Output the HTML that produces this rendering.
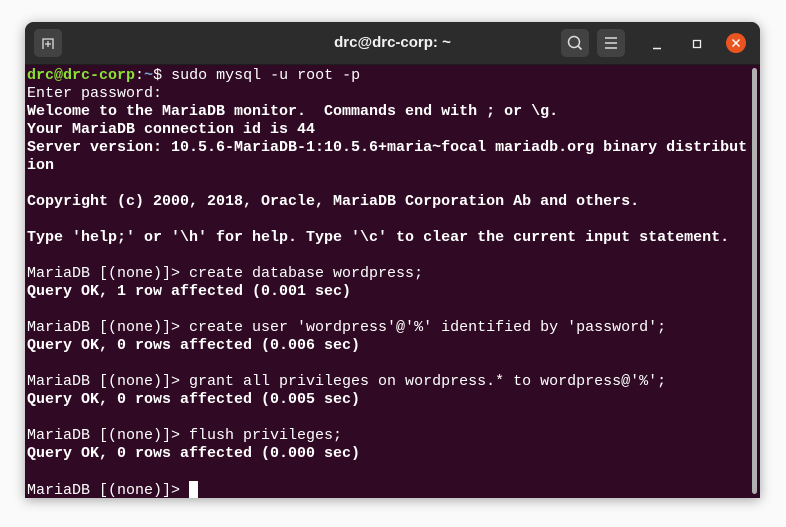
<!DOCTYPE html>
<html><head><style>
html,body{margin:0;padding:0;width:786px;height:527px;background:#fafafa;overflow:hidden}
.win{position:absolute;left:25px;top:22px;width:735px;height:476px;background:#300a24;border-radius:9px 9px 0 0;box-shadow:0 2px 12px rgba(0,0,0,.35);overflow:hidden}
.tb{position:absolute;left:0;top:0;width:735px;height:42px;background:#2c2c2c;border-bottom:1px solid #1e1e1e}
.btn{position:absolute;top:7px;width:28px;height:28px;background:#424242;border-radius:5px}
.title{position:absolute;left:0;width:735px;top:12px;text-align:center;color:#f2f2f2;font:bold 15px "Liberation Sans",sans-serif}
.term{position:absolute;left:2px;top:45px;font:15px/18px "Liberation Mono",monospace;color:#fff;white-space:pre}
b{font-weight:bold}
.g{color:#8ae234;font-weight:bold}.bl{color:#729fcf;font-weight:bold}
.sb{position:absolute;left:727px;top:46px;width:5px;height:426px;background:#b0b0b0;border-radius:3px}
.cur{display:inline-block;width:9px;height:17px;background:#fff;vertical-align:-4px}
</style></head><body>
<div class="win">
<div class="tb">
<div class="btn" style="left:9px"><svg width="28" height="28"><path d="M9 20V10h10v10" fill="none" stroke="#ddd" stroke-width="1.3"/><path d="M14 12v6M11 15h6" stroke="#ddd" stroke-width="1.3"/></svg></div>
<div class="title">drc@drc-corp: ~</div>
<div class="btn" style="left:536px"><svg width="28" height="28"><circle cx="13" cy="13" r="5.5" fill="none" stroke="#ddd" stroke-width="1.5"/><path d="M17 17l3.5 3.5" stroke="#ddd" stroke-width="1.6"/></svg></div>
<div class="btn" style="left:572px"><svg width="28" height="28"><path d="M8 9h12M8 14h12M8 19h12" stroke="#ddd" stroke-width="1.4"/></svg></div>
<svg style="position:absolute;left:620px;top:10px" width="110" height="24"><path d="M8 16.5h8" stroke="#eee" stroke-width="1.4"/><rect x="48.5" y="8.5" width="7" height="7" fill="none" stroke="#eee" stroke-width="1.3"/><circle cx="91" cy="11" r="10" fill="#e95420"/><path d="M87.5 7.5l7 7M94.5 7.5l-7 7" stroke="#fff" stroke-width="1.5"/></svg>
</div>
<div class="term"><span class="g">drc@drc-corp</span>:<span class="bl">~</span>$ sudo mysql -u root -p
Enter password: 
<b>Welcome to the MariaDB monitor.  Commands end with ; or \g.
Your MariaDB connection id is 44
Server version: 10.5.6-MariaDB-1:10.5.6+maria~focal mariadb.org binary distribut
ion

Copyright (c) 2000, 2018, Oracle, MariaDB Corporation Ab and others.

Type 'help;' or '\h' for help. Type '\c' to clear the current input statement.</b>

MariaDB [(none)]&gt; create database wordpress;
<b>Query OK, 1 row affected (0.001 sec)</b>

MariaDB [(none)]&gt; create user 'wordpress'@'%' identified by 'password';
<b>Query OK, 0 rows affected (0.006 sec)</b>

MariaDB [(none)]&gt; grant all privileges on wordpress.* to wordpress@'%';
<b>Query OK, 0 rows affected (0.005 sec)</b>

MariaDB [(none)]&gt; flush privileges;
<b>Query OK, 0 rows affected (0.000 sec)</b>

MariaDB [(none)]&gt; <span class="cur"></span></div>
<div class="sb"></div>
</div>
</body></html>
